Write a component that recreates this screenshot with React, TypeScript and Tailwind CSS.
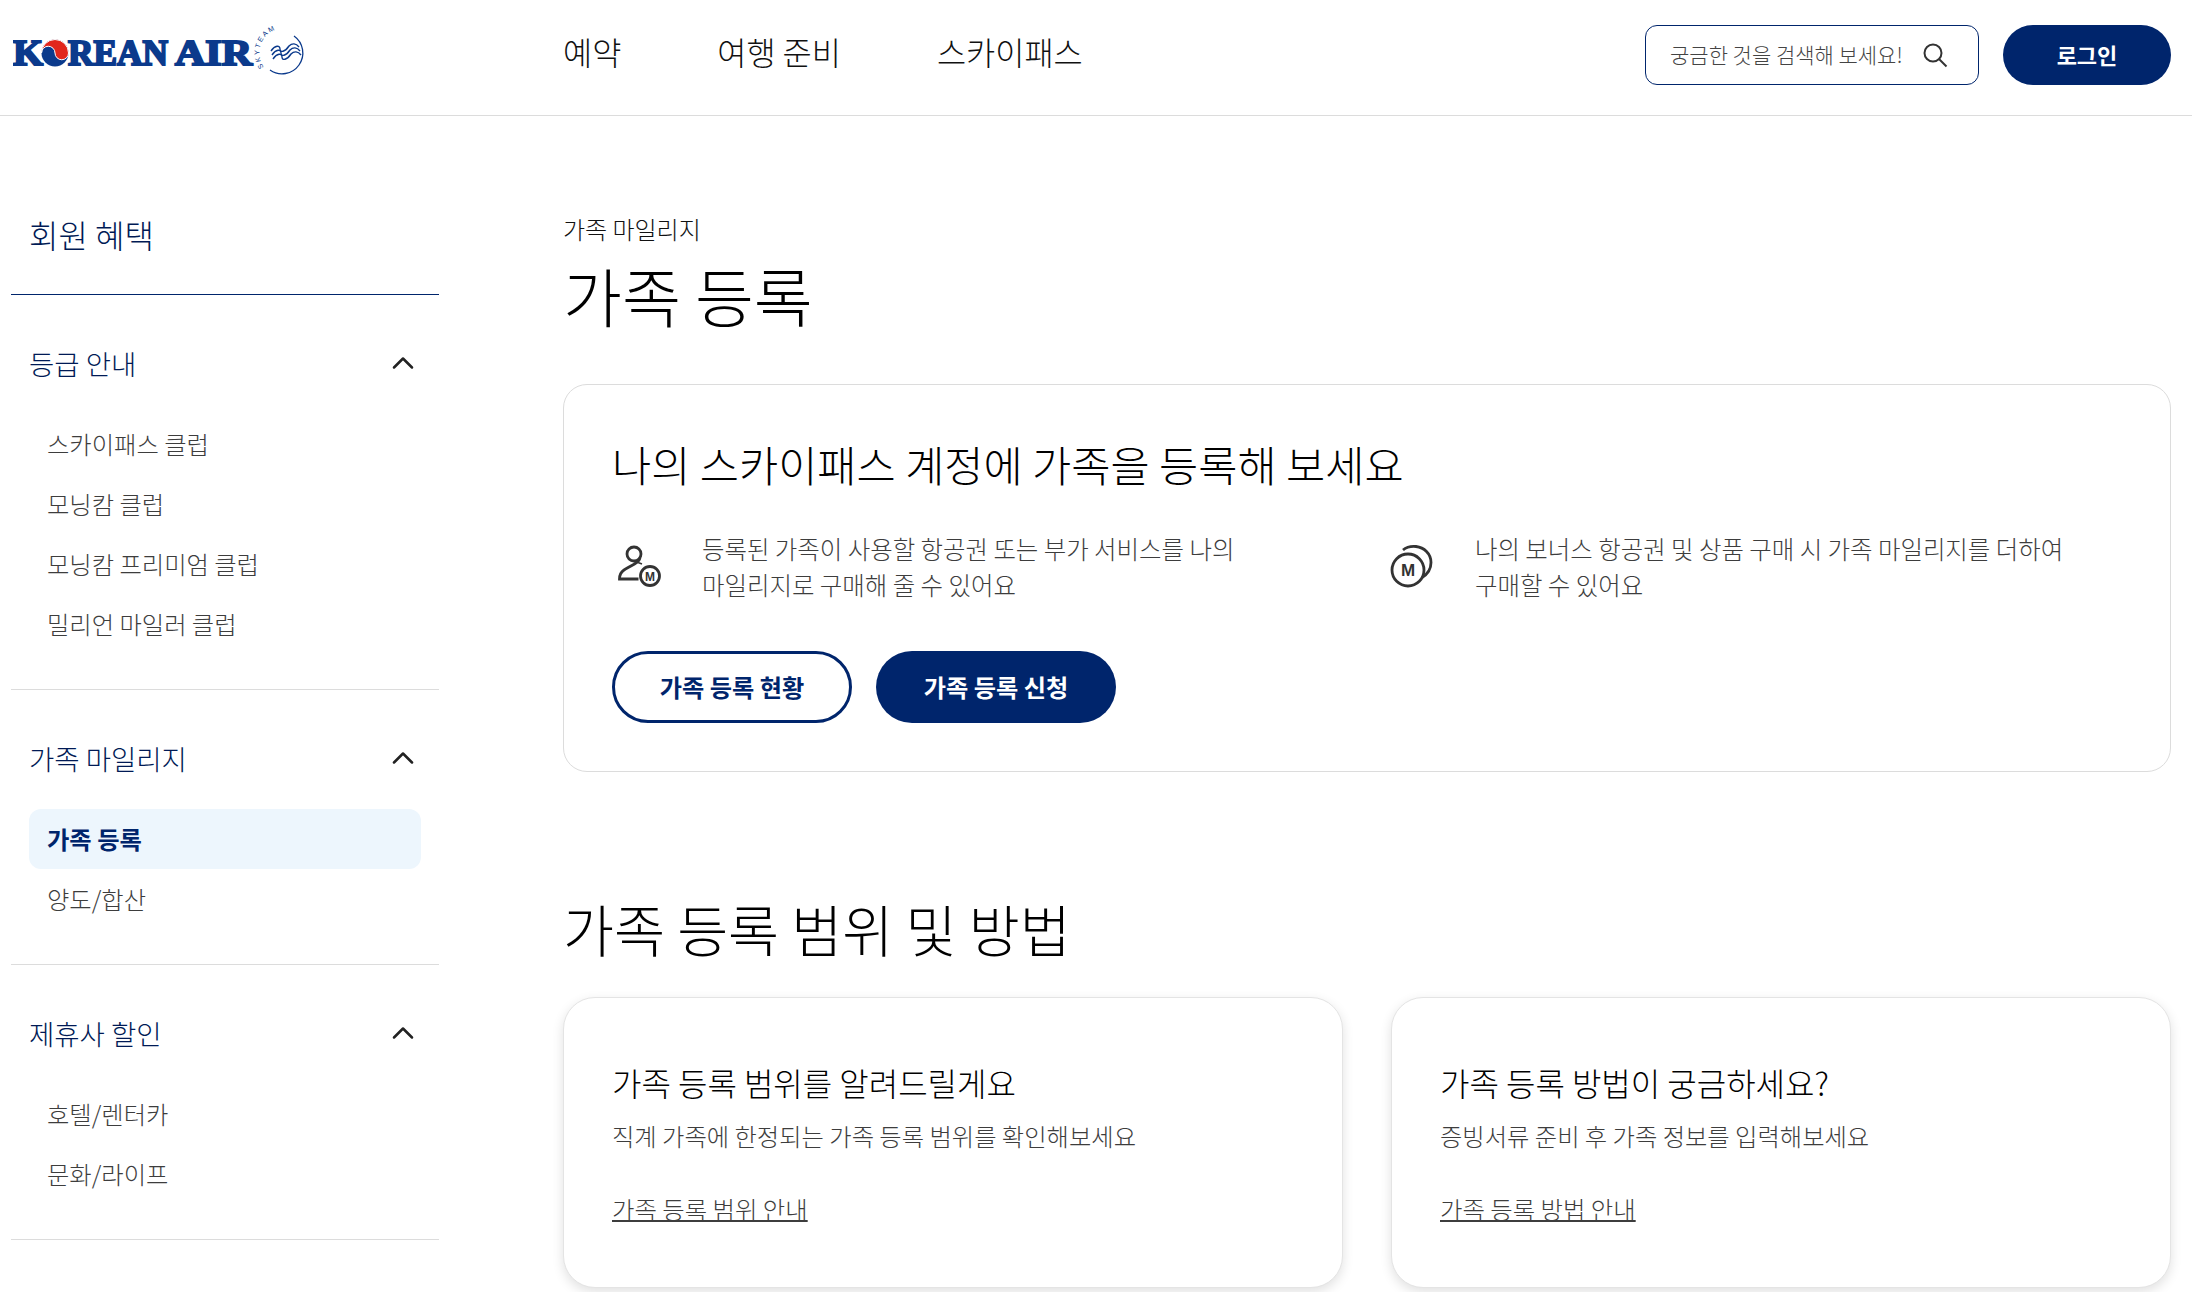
import type { ReactNode } from "react";
import { ChevronUp } from "lucide-react";

const NAVY = "#00256c";

function Wave({ x, y }: { x: number; y: number }) {
  return <path d="M0 8C4 2 9 2 9 6S14 9 18 3C21 0 25 0 28 4" transform={`translate(${x} ${y})`} />;
}

function Logo() {
  return (
    <svg width="300" height="60" viewBox="0 0 300 60" className="shrink-0">
      <g fill="#0b3a8c" stroke="#0b3a8c" strokeWidth="2" fontFamily="'Liberation Serif', serif" fontWeight="700">
        <text x="0" y="40" fontSize="35" textLength="30" lengthAdjust="spacingAndGlyphs">K</text>
        <text x="55" y="40" fontSize="35" textLength="100" lengthAdjust="spacingAndGlyphs">REAN</text>
        <text x="162" y="40" fontSize="35" textLength="77" lengthAdjust="spacingAndGlyphs">AIR</text>
      </g>
      <circle cx="42" cy="28" r="14.500" fill="#fff" />
      <circle cx="42" cy="28" r="13.500" fill="#0b3a8c" />
      <path d="M28.500 28A13.500 13.500 0 0 1 55.500 28A6.750 6.750 0 0 1 42 28A6.750 6.750 0 0 0 28.500 28Z" fill="#e1261c" stroke="#fff" strokeWidth="1" />
      <path id="skyteam-arc" d="M251 42A24 24 0 0 1 284 8" fill="none" />
      <text fontFamily="'Liberation Sans', sans-serif" fontSize="7" fill="#0b3a8c" letterSpacing="1.800">
        <textPath href="#skyteam-arc">SKYTEAM</textPath>
      </text>
      <path d="M257 45A20 20 0 0 0 281 11" fill="none" stroke="#0b3a8c" strokeWidth="1.300" />
      <g fill="none" stroke="#0b3a8c" strokeWidth="1.400">
        <Wave x={258} y={18} />
        <Wave x={259} y={22} />
        <Wave x={260} y={26} />
      </g>
    </svg>
  );
}

function PersonMileIcon() {
  return (
    <svg width="48" height="48" viewBox="0 0 48 48" fill="none" stroke="#333" strokeWidth="2.800">
      <circle cx="20" cy="11" r="7" />
      <path d="M26 15c-1 5-8 7-16 12c-3 2-4.500 4-4.500 9h19" />
      <path d="M24 19.500l4 1.500" strokeWidth="1.500" />
      <circle cx="36" cy="33" r="9.500" />
      <text x="36" y="37.500" textAnchor="middle" fontFamily="'Liberation Sans', sans-serif" fontWeight="700" fontSize="12" fill="#333" stroke="none">M</text>
    </svg>
  );
}

function CoinsIcon() {
  return (
    <svg width="48" height="48" viewBox="0 0 48 48" fill="none" stroke="#333" strokeWidth="2.800">
      <path d="M16 7c3-2.500 8-4 13-3.500c8 1 15 7 15 16c0 7-4 12-9 15" />
      <circle cx="21" cy="27" r="16" />
      <text x="21" y="33" textAnchor="middle" fontFamily="'Liberation Sans', sans-serif" fontWeight="700" fontSize="17" fill="#333" stroke="none">M</text>
    </svg>
  );
}

function SearchIcon() {
  return (
    <svg width="26" height="26" viewBox="0 0 26 26" fill="none" stroke="#333" strokeWidth="2">
      <circle cx="11" cy="11" r="8.500" />
      <path d="M17 17l7.500 7.500" />
    </svg>
  );
}

function SideGroup({ title, items, active }: { title: string; items: string[]; active?: string }) {
  return (
    <section className="border-b border-[#dcdcdc] pb-[35px] pt-[50px]">
      <div className="flex h-[36px] items-center justify-between pl-[18px] pr-[18px]">
        <span className="text-[27.500px] leading-[36px] font-light text-[#001a55]">{title}</span>
        <ChevronUp size={36} strokeWidth={1.7} color="#222" />
      </div>
      <ul className="mt-[33px] px-[18px]">
        {items.map((item) =>
          item === active ? (
            <li key={item} className="flex h-[60px] items-center rounded-[12px] bg-[#edf6fd] px-[18px] text-[24.300px] font-bold text-[#00256c]">
              {item}
            </li>
          ) : (
            <li key={item} className="flex h-[60px] items-center px-[18px] text-[24.300px] font-light text-[#3d3d3d]">
              {item}
            </li>
          )
        )}
      </ul>
    </section>
  );
}

function Benefit({ icon, lines }: { icon: ReactNode; lines: string[] }) {
  return (
    <div className="flex items-center">
      <div className="flex w-[90px] shrink-0 items-center pl-[2px]">{icon}</div>
      <p className="text-[24.450px] leading-[36px] font-light text-[#3d3d3d]">
        {lines.map((l) => (
          <span key={l} className="block">{l}</span>
        ))}
      </p>
    </div>
  );
}

function InfoCard({ title, desc, link }: { title: string; desc: string; link: string }) {
  return (
    <div className="h-[291px] rounded-[32px] border border-[#e4e4e4] bg-white px-[48px] pt-[62px] shadow-[0_4px_12px_rgba(0,0,0,0.12)]">
      <h3 className="text-[32px] leading-[44px] font-light text-black">{title}</h3>
      <p className="mt-[14px] text-[24.300px] leading-[36px] font-light text-[#3d3d3d]">{desc}</p>
      <a className="mt-[37px] inline-block text-[24.400px] leading-[36px] font-light text-[#3d3d3d] underline decoration-2">{link}</a>
    </div>
  );
}

export default function App() {
  return (
    <div
      className="h-[1292px] w-[2192px] overflow-hidden bg-white"
      style={{ fontFamily: "'Noto Sans CJK KR', 'Noto Sans', sans-serif" }}
    >
      <header className="flex h-[116px] items-center border-b border-[#dcdcdc] pb-[6px] pl-[13px] pr-[21px]">
        <div className="w-[550px]">
          <Logo />
        </div>
        <nav className="flex gap-[96px] pb-[5px] text-[31.700px] font-light text-[#111]">
          <a>예약</a>
          <a>여행 준비</a>
          <a>스카이패스</a>
        </nav>
        <div className="ml-auto flex items-center gap-[24px]">
          <div className="flex h-[60px] w-[334px] items-center justify-between rounded-[12px] border border-[#00256c] pl-[24px] pr-[30px]">
            <span className="text-[21px] font-light text-[#444]">궁금한 것을 검색해 보세요!</span>
            <SearchIcon />
          </div>
          <button className="h-[60px] w-[168px] rounded-full text-[22px] font-bold text-white" style={{ backgroundColor: NAVY }}>
            로그인
          </button>
        </div>
      </header>

      <div className="flex pl-[11px] pr-[21px]">
        <aside className="w-[428px] shrink-0">
          <div className="flex h-[179px] items-end border-b border-[#00256c] pb-[37px] pl-[18px]">
            <h2 className="text-[32px] leading-[46px] font-light text-[#001a55]">회원 혜택</h2>
          </div>
          <SideGroup title="등급 안내" items={["스카이패스 클럽", "모닝캄 클럽", "모닝캄 프리미엄 클럽", "밀리언 마일러 클럽"]} />
          <SideGroup title="가족 마일리지" items={["가족 등록", "양도/합산"]} active="가족 등록" />
          <SideGroup title="제휴사 할인" items={["호텔/렌터카", "문화/라이프"]} />
        </aside>

        <main className="ml-[124px] min-w-0 flex-1 pt-[95px]">
          <p className="text-[24px] leading-[36px] font-light text-[#111]">가족 마일리지</p>
          <h1 className="mt-[5px] text-[64px] leading-[84px] font-light text-black">가족 등록</h1>

          <div className="mt-[48px] h-[388px] rounded-[24px] border border-[#dcdcdc] px-[48px] pt-[51px]">
            <h2 className="text-[42.600px] leading-[56px] font-light text-black">나의 스카이패스 계정에 가족을 등록해 보세요</h2>
            <div className="mt-[39px] grid grid-cols-[773px_1fr]">
              <Benefit icon={<PersonMileIcon />} lines={["등록된 가족이 사용할 항공권 또는 부가 서비스를 나의", "마일리지로 구매해 줄 수 있어요"]} />
              <Benefit icon={<CoinsIcon />} lines={["나의 보너스 항공권 및 상품 구매 시 가족 마일리지를 더하여", "구매할 수 있어요"]} />
            </div>
            <div className="mt-[48px] flex gap-[24px]">
              <button className="h-[72px] w-[240px] rounded-full border-[3px] border-[#00256c] text-[24.200px] font-bold text-[#00256c]">가족 등록 현황</button>
              <button className="h-[72px] w-[240px] rounded-full text-[24.200px] font-bold text-white" style={{ backgroundColor: NAVY }}>가족 등록 신청</button>
            </div>
          </div>

          <h2 className="mt-[120px] text-[55.400px] leading-[72px] font-light text-black">가족 등록 범위 및 방법</h2>
          <div className="mt-[33px] grid grid-cols-2 gap-[48px]">
            <InfoCard title="가족 등록 범위를 알려드릴게요" desc="직계 가족에 한정되는 가족 등록 범위를 확인해보세요" link="가족 등록 범위 안내" />
            <InfoCard title="가족 등록 방법이 궁금하세요?" desc="증빙서류 준비 후 가족 정보를 입력해보세요" link="가족 등록 방법 안내" />
          </div>
        </main>
      </div>
    </div>
  );
}
